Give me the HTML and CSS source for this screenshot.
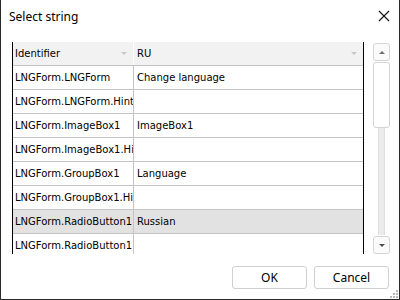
FILE: index.html
```html
<!DOCTYPE html>
<html>
<head>
<meta charset="utf-8">
<link rel="stylesheet" href="styles.css">
</head>
<body>
<div class="window">
  <div class="titlebar">
    <span class="title">Select string</span>
    <svg class="close" width="12" height="12" viewBox="0 0 12 12"><path d="M1 1 L11 11 M11 1 L1 11" stroke="#111" stroke-width="1.1" fill="none"/></svg>
  </div>
  <div class="main">
    <div class="grid">
      <div class="row head">
        <div class="cell c1">Identifier<span class="arrow"></span></div>
        <div class="cell c2">RU<span class="arrow"></span></div>
      </div>
      <div class="row"><div class="cell c1">LNGForm.LNGForm</div><div class="cell c2">Change language</div></div>
      <div class="row"><div class="cell c1">LNGForm.LNGForm.Hint</div><div class="cell c2"></div></div>
      <div class="row"><div class="cell c1">LNGForm.ImageBox1</div><div class="cell c2">ImageBox1</div></div>
      <div class="row"><div class="cell c1">LNGForm.ImageBox1.Hint</div><div class="cell c2"></div></div>
      <div class="row"><div class="cell c1">LNGForm.GroupBox1</div><div class="cell c2">Language</div></div>
      <div class="row"><div class="cell c1">LNGForm.GroupBox1.Hint</div><div class="cell c2"></div></div>
      <div class="row sel"><div class="cell c1">LNGForm.RadioButton1</div><div class="cell c2">Russian</div></div>
      <div class="row"><div class="cell c1">LNGForm.RadioButton1.Hint</div><div class="cell c2"></div></div>
    </div>
    <div class="scrollbar">
      <div class="sbtn"><span class="up"></span></div>
      <div class="track">
        <div class="thumb"></div>
        <div class="rail"></div>
      </div>
      <div class="sbtn"><span class="down"></span></div>
    </div>
  </div>
  <div class="footer">
    <button class="btn">OK</button>
    <button class="btn">Cancel</button>
  </div>
  <svg class="grip" width="9" height="9" viewBox="0 0 9 9">
    <rect x="7" y="1" width="2" height="2" fill="#b8b8b8"/>
    <rect x="4" y="4" width="2" height="2" fill="#b8b8b8"/>
    <rect x="7" y="4" width="2" height="2" fill="#b8b8b8"/>
    <rect x="1" y="7" width="2" height="2" fill="#b8b8b8"/>
    <rect x="4" y="7" width="2" height="2" fill="#b8b8b8"/>
    <rect x="7" y="7" width="2" height="2" fill="#b8b8b8"/>
  </svg>
</div>
</body>
</html>
```

FILE: styles.css
```css
html, body {
  margin: 0;
  padding: 0;
  background: #fff;
}
.window {
  position: relative;
  width: 400px;
  height: 300px;
  box-sizing: border-box;
  border-left: 1px solid #2a2a2a;
  border-right: 1px solid #2a2a2a;
  border-bottom: 1px solid #2a2a2a;
  background: #fff;
  font-family: "Noto Sans", "DejaVu Sans", sans-serif;
  overflow: hidden;
}
.titlebar {
  height: 33px;
  display: flex;
  align-items: center;
  justify-content: space-between;
  padding: 0 9px 0 8px;
}
.title {
  font-size: 12px;
  color: #000;
  margin-top: -1px;
}
.close {
  margin-top: -1px;
}
.main {
  display: flex;
  padding: 9px 0 0 11px;
  height: 212px;
}
.grid {
  width: 350px;
  height: 212px;
  border-left: 1px solid #000;
  border-right: 1px solid #000;
  overflow: hidden;
  font-family: "DejaVu Sans", sans-serif;
  font-size: 10px;
  color: #000;
}
.row {
  display: flex;
  height: 23px;
  border-bottom: 1px solid #c4c4c4;
}
.row.sel {
  background: #e2e2e2;
}
.cell {
  position: relative;
  display: flex;
  align-items: center;
  white-space: nowrap;
  overflow: hidden;
  padding-left: 2px;
  box-sizing: border-box;
}
.c1 {
  width: 121px;
  border-right: 1px solid #c4c4c4;
}
.c2 {
  flex: 1;
  padding-left: 3px;
}
.head {
  background: #f2f2f2;
}
.head .c1 {
  border-right: 1px solid #fff;
}
.arrow {
  position: absolute;
  right: 6px;
  top: 10px;
  width: 0;
  height: 0;
  border-left: 3px solid transparent;
  border-right: 3px solid transparent;
  border-top: 3px solid #c8c8c8;
}
.scrollbar {
  margin-left: 9px;
  width: 17px;
  display: flex;
  flex-direction: column;
  height: 211px;
  margin-top: 1px;
}
.sbtn {
  height: 16px;
  border: 1px solid #d4d4d4;
  border-radius: 3px;
  background: #fbfbfb;
  display: flex;
  align-items: center;
  justify-content: center;
}
.up {
  width: 0;
  height: 0;
  border-left: 3px solid transparent;
  border-right: 3px solid transparent;
  border-bottom: 3px solid #707070;
}
.down {
  width: 0;
  height: 0;
  border-left: 3px solid transparent;
  border-right: 3px solid transparent;
  border-top: 3px solid #505050;
}
.track {
  flex: 1;
  display: flex;
  flex-direction: column;
  align-items: center;
  padding: 1px 0;
}
.thumb {
  width: 15px;
  height: 64px;
  border: 1px solid #d4d4d4;
  border-radius: 3px;
  background: #fff;
}
.rail {
  flex: 1;
  width: 5px;
  background: #ececec;
  border-left: 1px solid #e0e0e0;
  border-right: 1px solid #e0e0e0;
}
.footer {
  display: flex;
  justify-content: flex-end;
  gap: 7px;
  padding: 12px 10px 0 0;
}
.btn {
  width: 75px;
  height: 23px;
  border: 1px solid #d0d0d0;
  border-radius: 3px;
  background: #fff;
  font-family: "Noto Sans", "DejaVu Sans", sans-serif;
  font-size: 12px;
  color: #000;
  padding: 0;
}
.grip {
  position: absolute;
  right: 1px;
  bottom: 1px;
}
```
